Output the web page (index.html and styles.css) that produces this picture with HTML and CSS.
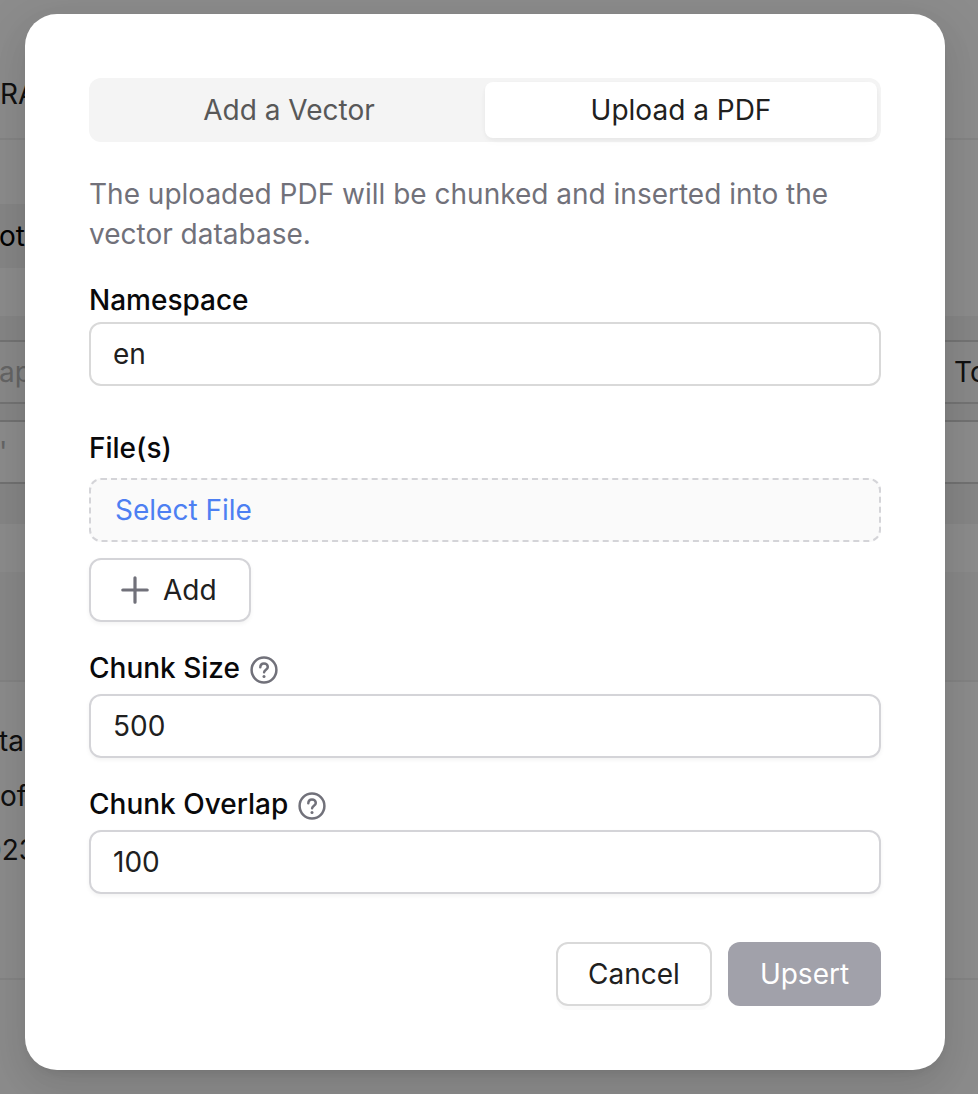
FILE: index.html
```html
<!DOCTYPE html>
<html lang="en">
<head>
<meta charset="utf-8">
<title>Upload a PDF</title>
<link rel="stylesheet" href="styles.css">
</head>
<body>
<div class="stage">
  <div class="page">
    <div class="page-title">RA</div>
    <div class="page-tabs"><span class="page-tab">ot</span></div>
    <div class="query">
      <div class="query-row"><span class="hint">ap</span><span>To</span></div>
      <div class="query-row query-vector"><span class="hint">'</span></div>
    </div>
    <div class="table-head"></div>
    <div class="table-body">
      <div>ta</div>
      <div class="indent">of</div>
      <div class="year">023</div>
    </div>
  </div>
  <div class="overlay">
    <form class="modal">
      <div class="segmented">
        <div class="segment">Add a Vector</div>
        <div class="segment active">Upload a PDF</div>
      </div>
      <p class="description">The uploaded PDF will be chunked and inserted into the vector database.</p>
      <div class="label">Namespace</div>
      <div class="field plain">en</div>
      <div class="label files-label">File(s)</div>
      <div class="file-picker">Select File</div>
      <div class="add-button">
        <svg class="plus" viewBox="0 0 28 28"><path d="M14 1.8v24.4M1.8 14h24.4"/></svg>
        <span>Add</span>
      </div>
      <div class="label size-label">Chunk Size
        <svg class="help" viewBox="0 0 28 28"><circle cx="14" cy="14" r="12.4"/><path d="M10.3 11.3C10.4 8.9 11.9 7.4 14 7.4S17.8 8.9 17.8 11C17.8 13.7 14.2 13.7 14.1 16.3"/><circle class="dot" cx="14" cy="20.5" r="1.5"/></svg>
      </div>
      <div class="field">500</div>
      <div class="label overlap-label">Chunk Overlap
        <svg class="help" viewBox="0 0 28 28"><circle cx="14" cy="14" r="12.4"/><path d="M10.3 11.3C10.4 8.9 11.9 7.4 14 7.4S17.8 8.9 17.8 11C17.8 13.7 14.2 13.7 14.1 16.3"/><circle class="dot" cx="14" cy="20.5" r="1.5"/></svg>
      </div>
      <div class="field">100</div>
      <div class="actions">
        <div class="button cancel">Cancel</div>
        <div class="button upsert">Upsert</div>
      </div>
    </form>
  </div>
</div>
</body>
</html>
```

FILE: styles.css
```css
* { box-sizing: border-box; }
body { margin: 0; font: 28px/40px Inter, sans-serif; color: #202020; }

.stage { display: grid; width: 978px; height: 1094px; overflow: hidden; }
.page, .overlay { grid-area: 1 / 1; }

/* Page behind the dialog */
.page { background: #fff; white-space: nowrap; overflow: hidden; }
.page-title { height: 140px; padding-top: 74px; border-bottom: 2px solid #f0f0f0; }
.page-tabs { height: 176px; padding-top: 64px; }
.page-tab { display: block; width: 200px; height: 64px; line-height: 64px; background: #f4f4f4; color: #000; text-indent: -1px; }
.query { height: 208px; padding: 24px 0; background: #f4f4f4; }
.query-row { display: flex; justify-content: space-between; height: 64px; line-height: 60px; border: solid #d4d4d4; border-width: 2px 0; background: #fafafa; }
.query-row span:last-child:not(.hint) { width: 24px; }
.query-vector { margin-top: 16px; background: #fff; border-color: #d0d0d0; }
.hint { color: #b8b8b8; text-indent: -1px; }
.table-head { height: 158px; border-top: 48px solid #fff; border-bottom: 2px solid #eee; background: #f8f8f8; }
.table-body { height: 298px; padding-top: 32px; border-bottom: 2px solid #f0f0f0; line-height: 54.5px; text-indent: -1px; }
.indent { padding-left: 1px; }
.year { margin-left: -15px; }

/* Dialog */
.overlay { background: rgba(0, 0, 0, .45); padding: 14px 33px 24px 25px; }
.modal {
  display: flex; flex-direction: column; width: 920px; height: 1056px; padding: 64px;
  border-radius: 32px; background: #fff;
  box-shadow: 0 12px 32px rgba(0, 0, 0, .08), 0 6px 12px -8px rgba(0, 0, 0, .12), 0 18px 56px 16px rgba(0, 0, 0, .05);
}
.segmented { display: flex; height: 64px; padding: 4px; border-radius: 12px; background: #f4f4f4; line-height: 56px; text-align: center; color: #585858; }
.segment { flex: 1; border-radius: 8px; }
.segment.active { background: #fff; color: #202020; box-shadow: 0 2px 4px rgba(0, 0, 0, .03), 0 2px 12px -2px rgba(0, 0, 0, .02), 0 4px 8px rgba(0, 0, 0, .02); }
.description { margin: 32px 0 26px; color: #71717a; }
.label { display: flex; align-items: center; gap: 10px; height: 40px; color: #09090b; font-weight: 500; }
.field { height: 64px; padding: 0 22px; border: 2px solid #d4d4d8; border-radius: 12px; line-height: 60px; box-shadow: 0 2px 4px rgba(0, 0, 0, .05); }
.field.plain { margin-top: 2px; border-color: #d9d9d9; box-shadow: none; }
.files-label { margin: 42px 0 10px; }
.file-picker { height: 64px; padding: 0 24px; border: 2px dashed #d4d4d8; border-radius: 12px; background: #fafafa; color: #4d7ff2; line-height: 60px; }
.add-button { display: flex; align-items: center; gap: 14px; width: 162px; height: 64px; margin-top: 16px; padding-left: 30px; border: 2px solid #d4d4d8; border-radius: 12px; box-shadow: 0 2px 4px rgba(0, 0, 0, .05); }
.plus, .help { width: 28px; height: 28px; fill: none; stroke: #71717a; stroke-width: 3.2; stroke-linecap: round; }
.help { margin-top: 4px; stroke-width: 2.5; }
.help .dot { fill: #71717a; stroke: none; }
.size-label { margin: 26px 0 6px; }
.overlap-label { margin: 26px 0 6px; }
.actions { display: flex; justify-content: flex-end; gap: 16px; margin-top: 48px; }
.button { height: 64px; border-radius: 12px; line-height: 64px; text-align: center; }
.cancel { width: 156px; border: 2px solid #d9d9d9; line-height: 60px; box-shadow: 0 4px 0 rgba(0, 0, 0, .02); }
.upsert { width: 153px; background: #a1a1aa; color: #fff; }
```
